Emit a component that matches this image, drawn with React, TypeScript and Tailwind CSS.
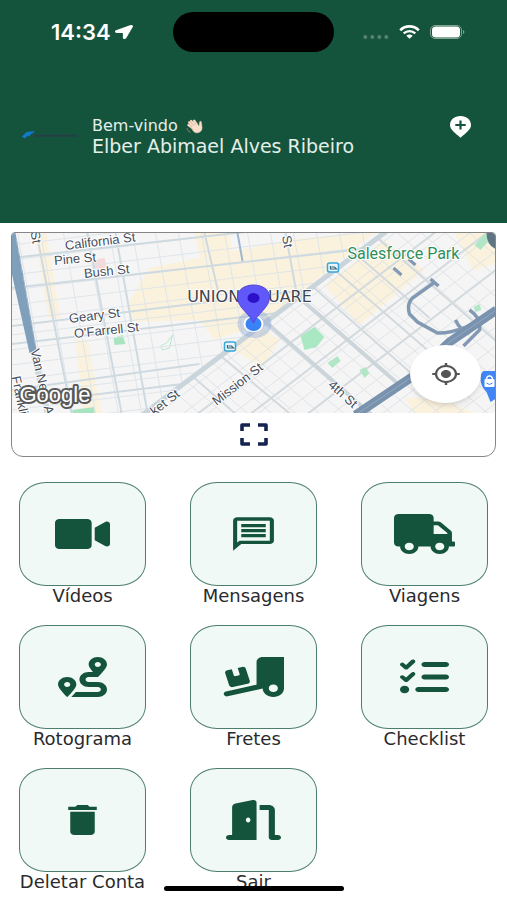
import type { ComponentType, SVGProps } from 'react';
import { FaLocationArrow, FaRoute, FaTruck, FaVideo } from 'react-icons/fa';
import { FaDoorOpen, FaListCheck, FaTruckRampBox } from 'react-icons/fa6';
import { MdDelete, MdMyLocation, MdOutlineMessage } from 'react-icons/md';

interface MenuItem {
  label: string;
  icon: ComponentType<SVGProps<SVGSVGElement>>;
  size: string;
}

const menuItems: MenuItem[] = [
  { label: 'Vídeos', icon: FaVideo, size: 'w-[55px] h-10' },
  { label: 'Mensagens', icon: MdOutlineMessage, size: 'w-[49px] h-10' },
  { label: 'Viagens', icon: FaTruck, size: 'w-[61px] h-10' },
  { label: 'Rotograma', icon: FaRoute, size: 'w-[49px] h-10' },
  { label: 'Fretes', icon: FaTruckRampBox, size: 'w-[61px] h-10' },
  { label: 'Checklist', icon: FaListCheck, size: 'w-[49px] h-10' },
  { label: 'Deletar Conta', icon: MdDelete, size: 'w-[49px] h-10' },
  { label: 'Sair', icon: FaDoorOpen, size: 'w-[55px] h-10' },
];

function StatusBar() {
  return (
    <div className="grid grid-cols-3 items-center px-3 pt-3">
      <div className="flex items-center gap-1 pl-[39px] text-white">
        <span className="font-['Inter'] text-[22px] leading-10 font-semibold">14:34</span>
        <FaLocationArrow className="h-[14px] w-[18px]" preserveAspectRatio="none" />
      </div>
      <div className="h-10 rounded-full bg-black" />
      <div className="flex items-center justify-end gap-[10px] pr-[30px]">
        <svg viewBox="0 0 26 4" className="mt-[9px] h-1 w-[26px] fill-[#56836f]">
          <circle cx="2.3" cy="2" r="2" />
          <circle cx="9.3" cy="2" r="2" />
          <circle cx="16.3" cy="2" r="2" />
          <circle cx="23.3" cy="2" r="2" />
        </svg>
        <svg viewBox="0 0 21 14" className="h-[14px] w-[21px]" fill="none" stroke="#fff">
          <path d="M1.2 5.2C6.5 .1 14.500 .1 19.800 5.200" strokeWidth="2.600" />
          <path d="M4.700 8.400c3.300-3 8.300-3 11.600 0" strokeWidth="2.400" />
          <path d="M7.300 10.800c1.900-1.600 4.500-1.600 6.400 0L10.500 13.700z" fill="#fff" stroke="none" />
        </svg>
        <svg viewBox="0 0 35 14" className="h-[14px] w-[35px]">
          <rect x=".5" y=".5" width="31" height="13" rx="4.500" fill="none" stroke="#7fa292" />
          <rect x="2" y="1.500" width="28" height="11" rx="3.500" fill="#fff" />
          <path d="M33 5c1.800.5 1.800 3.500 0 4z" fill="#7fa292" />
        </svg>
      </div>
    </div>
  );
}

function BrandLogo() {
  return (
    <svg viewBox="0 0 56 9" className="h-[9px] w-14" role="img" aria-label="Logo">
      <path d="M0 5.500 4 1.500Q5.500.4 8 .4H13.500L9 3.300 7.500 5H5.500L2.500 7.500z" fill="#1378c8" />
      <path d="M10 4 13 3h38l4 .5-2 2.800H10z" fill="#254b49" />
      <path d="M13 4.700H55" stroke="#1b403e" strokeWidth="2" strokeDasharray="3 1" />
    </svg>
  );
}

function WavingHand() {
  return (
    <svg viewBox="0 0 18 15" className="h-[15px] w-[18px]" fill="none" strokeLinecap="round" strokeLinejoin="round">
      <path d="m6.500 9-4-3M7.500 7.500 3.200 3.400M9 6.200 5.200 2M10.700 5.500 8.200 1.700" stroke="#c9a68f" strokeWidth="2.500" />
      <path d="m6.500 9-4-3M7.500 7.500 3.200 3.400M9 6.200 5.200 2M10.700 5.500 8.200 1.700" stroke="#f7dfcb" strokeWidth="1.800" />
      <path d="M5 7.500 10.500 4l2.500 3 .4-3.600c.2-1.500 2-1.300 2.100 0l.6 5c.2 3.200-2.200 5.400-5 5.500-3 .1-4.700-2-6.100-6.400z" fill="#f7dfcb" stroke="#d8b59c" strokeWidth=".5" />
      <path d="M1 9.500c.5 1.700 1.500 2.900 3 3.700" stroke="#b98b6d" strokeWidth=".8" />
    </svg>
  );
}

function Header() {
  return (
    <header className="h-[223px] bg-[#15543c]">
      <StatusBar />
      <div className="mt-16 flex items-start pr-9 pl-[22px]">
        <div className="mt-[15px] mr-[14px]">
          <BrandLogo />
        </div>
        <div className="flex-1 font-['DejaVu_Sans',sans-serif] text-[#e4efea]">
          <p className="flex items-center gap-2 text-base leading-5">
            Bem-vindo <WavingHand />
          </p>
          <p className="text-[19px] leading-5">Elber Abimael Alves Ribeiro</p>
        </div>
        <button type="button" aria-label="Adicionar local">
          <svg viewBox="0 0 21 22" className="h-[22px] w-[21px]">
            <path d="M10.500 0C4.500 0 0 3.800 0 9c0 4.500 4.500 7.500 10.500 12.700C16.500 16.500 21 13.500 21 9c0-5.200-4.500-9-10.500-9z" fill="#fff" />
            <path d="M5.300 9h10.400M10.500 4.600v8.800" stroke="#15543c" strokeWidth="2.200" />
          </svg>
        </button>
      </div>
    </header>
  );
}

const steps = (from: number, to: number, by: number) =>
  Array.from({ length: Math.floor((to - from) / by) + 1 }, (_, i) => from + i * by);

function MapStreets() {
  return (
    <>
      {/* north of Market */}
      <g clipPath="url(#north)">
        <path d="M150 268 300 238 375 233 260 325 215 340 200 320 135 322 128 305z" fill="#fbf2dd" />
        <path d="M35 233h12l14 85H49zM76 340l12 0 14 73H84zM195 233l34 0 14 60-34 8z" fill="#fbf2dd" />
        <path d="m93 260 12-2 3 10-12 2z" fill="#f8d9da" />
        <path d="m114 338 9-3 3 9-11 1z" fill="#a9e4c1" />
        <path d="M72 410l23-3v6H72z" fill="#a9e4c1" />
        <path d="m161 346 6-3 6-8-3 13-7 2z" fill="none" stroke="#b9e8cc" />
        <g stroke="#dfe5e9" strokeWidth="1">
          {steps(245, 470, 15).map((y) => (
            <path key={y} d={`M12 ${y}L400 ${y - 47}`} />
          ))}
          {steps(18, 370, 23).map((x) => (
            <path key={x} d={`M${x} 233l32 180`} />
          ))}
        </g>
        <g stroke="#cfdae0" strokeWidth="2">
          <path d="M12 258 390 216M12 288 390 246M12 326 390 280M12 344 390 300M12 390 200 364M50 400 200 382M37 233 72 413M88 233l34 180M116 233l32 180M205 233l14 60M286 233l14 76" />
        </g>
        <path d="M238 233l5 28" stroke="#9db8cd" strokeWidth="2" />
      </g>

      {/* south of Market */}
      <g clipPath="url(#south)">
        <path d="M325 285 385 240 425 270 360 325zM258 325 280 340 262 368 235 350zM405 398l35 0 35 15h-60zM455 233l41 0 0 30-22 8z" fill="#fbf2dd" />
        <g stroke="#e0e3e6" strokeWidth="1">
          {steps(290, 760, 19).map((y) => (
            <path key={y} d={`M120 ${y + 20}l400 -305`} />
          ))}
          {steps(-60, 480, 24).map((x) => (
            <path key={x} d={`M${x} 190l290 249`} />
          ))}
        </g>
        <g stroke="#d3dade" strokeWidth="2">
          <path d="M190 420 440 229M243 420 490 231M300 420 500 267M300 275 425 385M333 268 465 382M352 250 430 318M372 233 500 344M220 355 298 420M195 378 243 420" />
        </g>
        <path d="M250 308 378 420M285 285 400 385" stroke="#cbd5da" strokeWidth="4" />
        <path d="m301 336 14-9 10 10-8 10-12 3z" fill="#a9e8c3" />
        <path d="m328 363 10-7 3 5-8 7zM360 370l6-3 4 6-5 5zM474 307l6-3 2 6-6 2zM475 245l10-11 8 3-12 13z" fill="#b1e7c7" />
        <g fill="none" stroke="#8199b3" strokeWidth="3.500">
          <path d="M434 283 413 298Q407 304 410 314L418 322 438 333Q460 334 496 312M431 279l8 7M470 310Q482 318 480 330L464 346M456 320q5 11 14 13" />
          <path d="M394 268l8 7M409 259l7 6" strokeWidth="3" />
        </g>
        <path d="M356 415 414 376 450 342 497 310" fill="none" stroke="#7992ad" strokeWidth="9" />
        <path d="M356 415 414 376 450 342 497 310" fill="none" stroke="#92a9bf" strokeWidth="1" />
      </g>
      <path d="M120 432 390 229" stroke="#cad5db" strokeWidth="5" />

      {/* Van Ness */}
      <path d="M33 348 48 413" stroke="#cfd9e0" strokeWidth="6" />
      <path d="M12 233h4l7 38 14 79-7 3-15-67-3-14z" fill="#7f9fbb" />
      <path d="M17 240 36 346" stroke="#a9bfd2" strokeDasharray="6 3" />
    </>
  );
}

function MapLabels() {
  return (
    <>
      <g
        className="font-['Liberation_Sans',sans-serif] text-[13px]"
        fill="#464d59"
        stroke="#fff"
        strokeWidth="2"
        paintOrder="stroke"
      >
        <text transform="translate(66 250) rotate(-7)">California St</text>
        <text transform="translate(55 265) rotate(-5)">Pine St</text>
        <text transform="translate(85 278) rotate(-6)">Bush St</text>
        <text transform="translate(70 323) rotate(-7)">Geary St</text>
        <text transform="translate(75 338) rotate(-6)">O'Farrell St</text>
        <text transform="translate(31 232) rotate(80)">St</text>
        <text transform="translate(280 222) rotate(80)">ry St</text>
        <text transform="translate(31 350) rotate(77)">Van Ness Av</text>
        <text transform="translate(12 377) rotate(78)">Franklin</text>
        <text transform="translate(155 416) rotate(-38)">ket St</text>
        <text transform="translate(217 406) rotate(-38)">Mission St</text>
        <text transform="translate(328 386) rotate(42)">4th St</text>
      </g>
      <text
        x="348"
        y="259"
        className="font-['Roboto',sans-serif] text-base"
        fill="#2e8f5a"
        stroke="#fff"
        strokeWidth="2"
        paintOrder="stroke"
      >
        Salesforce Park
      </text>
      <text
        x="250"
        y="302"
        textAnchor="middle"
        className="font-['DejaVu_Sans',sans-serif] text-base"
        fill="#3f4550"
        stroke="#fff"
        strokeWidth="2"
        paintOrder="stroke"
      >
        UNION SQUARE
      </text>
      <text
        x="20"
        y="402"
        className="font-['Liberation_Sans',sans-serif] text-[22px]"
        fill="#fff"
        stroke="#595959"
        strokeWidth="4"
        strokeLinejoin="round"
        paintOrder="stroke"
      >
        Google
      </text>
    </>
  );
}

function MapView() {
  return (
    <svg viewBox="12 233 484 180" preserveAspectRatio="xMidYMid slice" className="h-[180px] w-full">
      <defs>
        <clipPath id="north">
          <path d="M12 233H385L120 432H12z" />
        </clipPath>
        <clipPath id="south">
          <path d="M385 233H496V413H145z" />
        </clipPath>
      </defs>
      <rect x="12" y="233" width="484" height="180" fill="#f5f5f6" />
      <MapStreets />

      {/* transit stops */}
      {[
        [225, 342],
        [328, 263],
      ].map(([x, y]) => (
        <g key={x}>
          <rect x={x} y={y} width="11" height="9" rx="2" fill="#e9f6fd" stroke="#39a6d8" strokeWidth="1.500" />
          <path d={`M${x + 3} ${y + 3}v3h6l-2-2h-3`} fill="none" stroke="#3a6378" strokeWidth="1.200" />
        </g>
      ))}

      {/* shop marker */}
      <path d="M484 371h12v28l-5 3-4-10q-6-6-6-13 0-6 3-8z" fill="#4285f4" />
      <rect x="485" y="379" width="10" height="8" rx="1" fill="#fff" />
      <path d="M487 380q0-4 3-4t3 4" fill="none" stroke="#fff" strokeWidth="1.500" />
      <path d="M487 383q3 3 6 0" fill="none" stroke="#4285f4" />
      <path d="M487 233h9v16q-9-4-9-16z" fill="#607583" />

      <MapLabels />

      {/* user position and pin */}
      <ellipse cx="255" cy="324" rx="17" ry="14" fill="#7f9fd6" opacity=".35" />
      <ellipse cx="254" cy="324" rx="10" ry="8" fill="#fff" />
      <ellipse cx="254" cy="324" rx="8" ry="7" fill="#3b82f6" />
      <path d="M254 323C250 313 238 308 238 297c0-8 8-12 16-12s16 4 16 12c0 11-12 16-16 26z" fill="#6158fa" stroke="#5147d6" />
      <ellipse cx="254" cy="298" rx="6" ry="5" fill="#2b12c9" />
    </svg>
  );
}

function MapCard() {
  return (
    <section className="mx-[11px] mt-[9px] overflow-hidden rounded-t rounded-b-xl border border-[#868686]">
      <div className="relative">
        <MapView />
        <button
          type="button"
          aria-label="Minha localização"
          className="absolute right-[14px] bottom-[10px] flex h-[58px] w-[71px] items-center justify-center rounded-[50%] bg-white text-[#555] shadow-md"
        >
          <MdMyLocation className="h-6 w-[30px]" preserveAspectRatio="none" />
        </button>
      </div>
      <button type="button" aria-label="Expandir mapa" className="flex h-[43px] w-full items-center justify-center">
        <svg viewBox="0 0 28 23" className="h-[23px] w-7" fill="none" stroke="#14234f" strokeWidth="3.600" strokeLinejoin="round">
          <path d="M10 2H2V8M18 2h8V8M10 21H2V15M18 21h8V15" />
        </svg>
      </button>
    </section>
  );
}

export default function App() {
  return (
    <div className="min-h-screen overflow-hidden bg-white">
      <Header />
      <MapCard />

      <nav className="mt-[25px] grid grid-cols-3 gap-x-11 gap-y-[19px] px-[19px]">
        {menuItems.map(({ label, icon: Icon, size }) => (
          <button key={label} type="button" className="flex flex-col items-stretch">
            <span className="flex h-[104px] items-center justify-center rounded-[27px/23px] border border-[#4c7f6b] bg-[#f0f9f5] text-[#15543c]">
              <Icon className={size} preserveAspectRatio="none" />
            </span>
            <span className="flex justify-center font-['DejaVu_Sans',sans-serif] text-lg leading-5 whitespace-nowrap text-[#2a2a2d]">
              {label}
            </span>
          </button>
        ))}
      </nav>

      {/* home indicator */}
      <div className="fixed bottom-[9px] left-1/2 h-[5px] w-[180px] -translate-x-1/2 rounded-full bg-black" />
    </div>
  );
}
